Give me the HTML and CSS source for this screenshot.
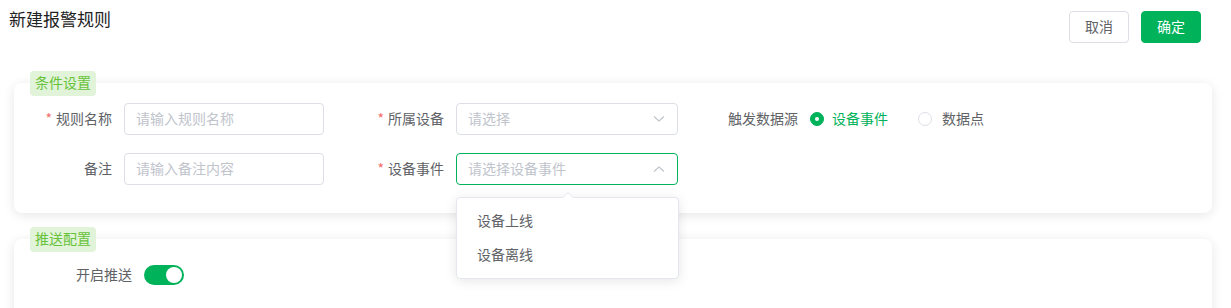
FILE: index.html
```html
<!DOCTYPE html>
<html lang="zh">
<head>
<meta charset="utf-8">
<link rel="stylesheet" href="styles.css">
</head>
<body>
<div class="page">
  <div class="header">
    <div class="title">新建报警规则</div>
    <div class="actions">
      <button class="btn btn-default">取消</button>
      <button class="btn btn-primary">确定</button>
    </div>
  </div>

  <div class="section sec-first">
    <span class="sec-tag">条件设置</span>
    <div class="card">
      <div class="form-row">
        <div class="item">
          <label class="label"><span class="req">*</span>规则名称</label>
          <div class="input"><span class="ph">请输入规则名称</span></div>
        </div>
        <div class="item">
          <label class="label"><span class="req">*</span>所属设备</label>
          <div class="select"><span class="ph">请选择</span>
            <svg class="chev" width="12" height="8" viewBox="0 0 12 8"><polyline points="1,1.5 6,6 11,1.5" fill="none" stroke="#c0c4cc" stroke-width="1.2"/></svg>
          </div>
        </div>
        <div class="item">
          <label class="label">触发数据源</label>
          <div class="radios">
            <span class="radio checked"><span class="dot"></span><span class="rtext">设备事件</span></span>
            <span class="radio"><span class="dot"></span><span class="rtext">数据点</span></span>
          </div>
        </div>
      </div>
      <div class="form-row">
        <div class="item">
          <label class="label">备注</label>
          <div class="input"><span class="ph">请输入备注内容</span></div>
        </div>
        <div class="item">
          <label class="label"><span class="req">*</span>设备事件</label>
          <div class="select focus"><span class="ph">请选择设备事件</span>
            <svg class="chev" width="12" height="8" viewBox="0 0 12 8"><polyline points="1,6.5 6,2 11,6.5" fill="none" stroke="#c0c4cc" stroke-width="1.2"/></svg>
            <div class="dropdown">
              <span class="arrow"></span>
              <div class="opt">设备上线</div>
              <div class="opt">设备离线</div>
            </div>
          </div>
        </div>
      </div>
    </div>
  </div>

  <div class="section sec-second">
    <span class="sec-tag">推送配置</span>
    <div class="card card2">
      <div class="form-row">
        <div class="item">
          <label class="label wide">开启推送</label>
          <div class="switch"><span class="knob"></span></div>
        </div>
      </div>
    </div>
  </div>
</div>
</body>
</html>
```

FILE: styles.css
```css
* { box-sizing: border-box; }
html, body { margin: 0; padding: 0; background: #fff; }
body {
  font-family: "Noto Sans CJK SC", "Noto Sans", sans-serif;
  font-size: 14px;
  color: #606266;
}
.page { width: 1231px; height: 308px; overflow: hidden; }
.header {
  display: flex;
  justify-content: space-between;
  align-items: flex-start;
  padding: 0 30px 0 9px;
}
.title {
  margin-top: 7px;
  font-size: 17px;
  line-height: 24px;
  color: #222;
}
.actions { display: flex; gap: 12px; margin-top: 11px; }
.btn {
  width: 60px;
  height: 32px;
  border-radius: 4px;
  font-family: inherit;
  font-size: 14px;
  padding: 0 0 2px;
  line-height: 28px;
}
.btn-default { background: #fff; border: 1px solid #dcdfe6; color: #606266; }
.btn-primary { background: #00b25a; border: 1px solid #00b25a; color: #fff; }

.section { position: relative; margin: 0 19px 0 14px; }
.sec-first { margin-top: 40px; }
.sec-second { margin-top: 26px; }
.sec-tag {
  position: absolute;
  left: 16px;
  top: -12px;
  z-index: 2;
  height: 25px;
  line-height: 23px;
  padding: 0 5px 2px;
  background: #e1f3d8;
  color: #67c23a;
  border-radius: 4px;
  font-size: 14px;
}
.card {
  background: #fff;
  border-radius: 8px;
  box-shadow: 0 2px 12px 0 rgba(0, 0, 0, 0.1);
  padding: 20px 10px 10px;
}
.card2 { height: 120px; }
.form-row { display: flex; margin-bottom: 18px; }
.item { display: flex; align-items: center; margin-right: 32px; height: 32px; }
.label {
  width: 100px;
  padding-right: 12px;
  padding-bottom: 2px;
  text-align: right;
  line-height: 30px;
  color: #606266;
}
.label.wide { width: 120px; }
.req { color: #f56c6c; margin-right: 4px; }
.input, .select {
  position: relative;
  height: 32px;
  border: 1px solid #dcdfe6;
  border-radius: 4px;
  padding: 0 11px;
  line-height: 28px;
  display: flex;
  align-items: center;
}
.ph { color: #c0c4cc; padding-bottom: 2px; }
.input { width: 200px; }
.select { width: 222px; justify-content: space-between; }
.select.focus { border-color: #00b25a; }
.chev { margin-right: 1px; }
.radios { display: flex; align-items: center; }
.radio { display: flex; align-items: center; margin-right: 30px; }
.dot {
  width: 14px;
  height: 14px;
  border-radius: 50%;
  border: 1px solid #dcdfe6;
  background: #fff;
  position: relative;
}
.radio.checked .dot { border-color: #00b25a; background: #00b25a; }
.radio.checked .dot::after {
  content: "";
  position: absolute;
  left: 50%;
  top: 50%;
  width: 4px;
  height: 4px;
  margin: -2px 0 0 -2px;
  background: #fff;
  border-radius: 50%;
}
.rtext { padding-left: 8px; padding-bottom: 2px; line-height: 28px; }
.radio + .radio .rtext { padding-left: 10px; }
.radio.checked .rtext { color: #00b25a; }

.dropdown {
  position: absolute;
  left: -1px;
  top: 43px;
  width: 223px;
  background: #fff;
  border: 1px solid #e4e7ed;
  border-radius: 4px;
  box-shadow: 0 2px 12px 0 rgba(0, 0, 0, 0.1);
  padding: 6px 0;
  line-height: 32px;
  z-index: 5;
}
.arrow {
  position: absolute;
  top: -6px;
  left: 105px;
  width: 0;
  height: 0;
  border-left: 6px solid transparent;
  border-right: 6px solid transparent;
  border-bottom: 6px solid #e4e7ed;
}
.arrow::after {
  content: "";
  position: absolute;
  left: -5px;
  top: 1px;
  border-left: 5px solid transparent;
  border-right: 5px solid transparent;
  border-bottom: 5px solid #fff;
}
.opt {
  height: 34px;
  line-height: 32px;
  padding: 0 20px 2px;
  color: #606266;
}
.switch {
  position: relative;
  width: 40px;
  height: 20px;
  border-radius: 10px;
  background: #00b25a;
}
.knob {
  position: absolute;
  right: 2px;
  top: 2px;
  width: 16px;
  height: 16px;
  border-radius: 50%;
  background: #fff;
}
```
